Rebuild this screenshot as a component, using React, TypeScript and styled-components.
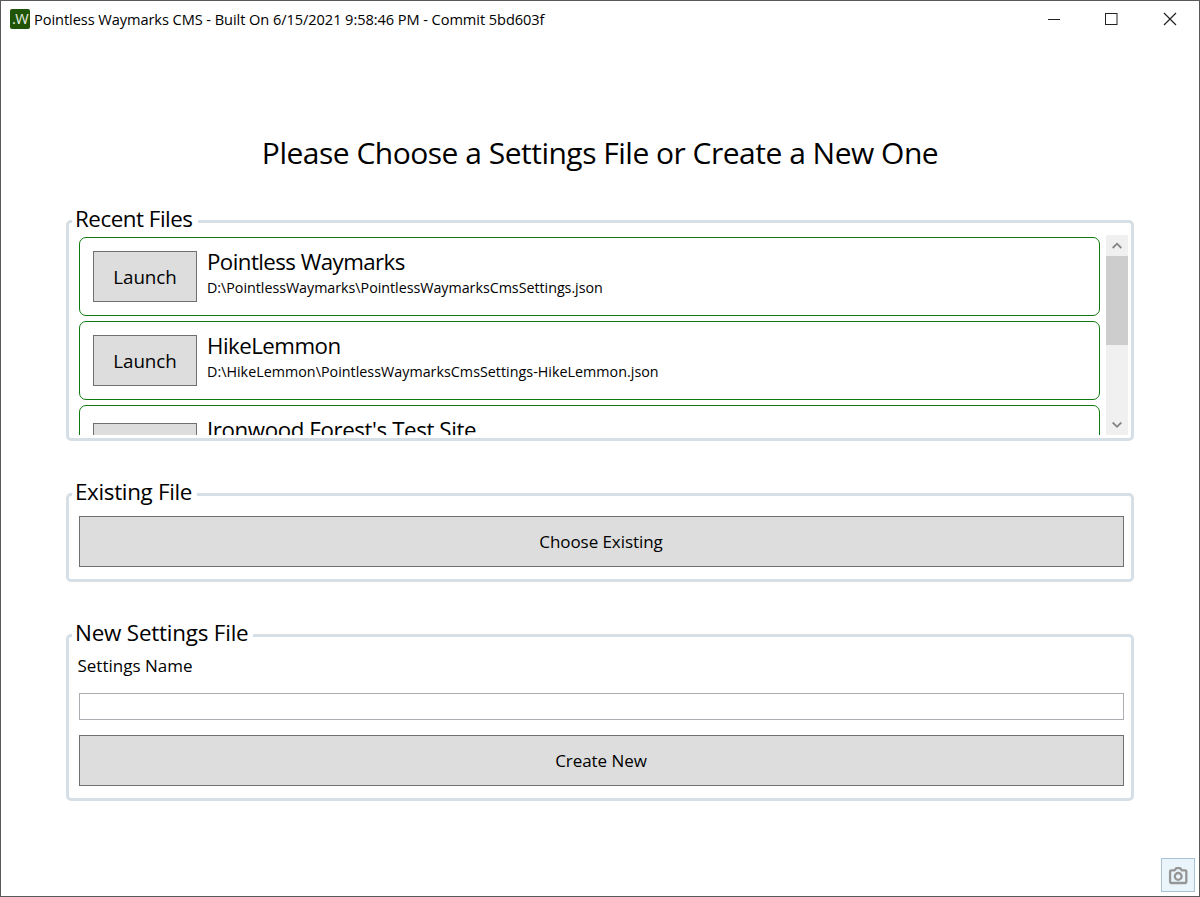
import React from "react";
import styled, { createGlobalStyle } from "styled-components";

const GlobalStyle = createGlobalStyle`
  * { box-sizing: border-box; }
  html, body { margin: 0; padding: 0; }
  body { background: #fff; overflow: hidden; }
  button, input { font: inherit; color: inherit; border-radius: 0; }
`;

const Window = styled.div`
  width: 1200px;
  height: 897px;
  display: flex;
  flex-direction: column;
  border: 1px solid #595959;
  background: #fff;
  color: #000;
  font-family: "Open Sans", "Noto Sans", sans-serif;
  white-space: nowrap;
`;

const TitleBar = styled.header`
  display: flex;
  align-items: center;
  height: 36px;
  padding: 0 7px 0 8px;
`;

const Title = styled.div`
  flex: 1;
  margin-left: 5px;
  font-size: 14.6px;
  line-height: 20px;
  letter-spacing: -0.07px;
`;

const Caption = styled.div`
  display: flex;
  svg { display: block; width: 58px; height: 36px; }
`;

const Content = styled.main`
  flex: 1;
  display: flex;
  flex-direction: column;
  padding: 96px 65px 0;
`;

const Heading = styled.h1`
  margin: 0 0 35px;
  height: 40px;
  line-height: 40px;
  font-size: 30px;
  font-weight: 400;
  text-align: center;
  letter-spacing: -0.5px;
`;

const GroupBox = styled.fieldset<{ $height: number; $gap: number }>`
  min-width: 0;
  height: ${(p) => p.$height}px;
  margin: 0 0 ${(p) => p.$gap}px;
  padding: 0 7px 0 10px;
  border: 3px solid #d5dfe5;
  border-radius: 5px;
`;

const Legend = styled.legend<{ $width: number; $spacing: number }>`
  width: ${(p) => p.$width}px;
  height: 27px;
  margin-left: -7px;
  padding: 0 0 0 3px;
  line-height: 21px;
  font-size: 22.4px;
  letter-spacing: ${(p) => p.$spacing}px;
`;

const RecentArea = styled.div`
  display: flex;
  justify-content: space-between;
  height: 200px;
  margin-right: -4px;
`;

const RecentList = styled.div`
  width: 1021px;
  height: 200px;
  padding-top: 2px;
  overflow: hidden;
`;

const Card = styled.article<{ $tall?: boolean }>`
  display: flex;
  align-items: center;
  height: ${(p) => (p.$tall ? 87 : 79)}px;
  margin-bottom: 5px;
  padding: 0 13px;
  border: 1px solid #0f7a0f;
  border-radius: 7px;
`;

const Button = styled.button<{ $width?: string; $size?: number }>`
  display: block;
  width: ${(p) => p.$width ?? "100%"};
  height: 51px;
  flex: none;
  padding: ${(p) => (p.$size ? "0" : "1px 1px 0 0")};
  border: 1px solid #707070;
  background: #ddd;
  font-size: ${(p) => p.$size ?? 17}px;
  line-height: 24px;
  letter-spacing: -0.06px;
`;

const FileInfo = styled.div`
  align-self: flex-start;
  margin-left: 10px;
  padding-top: 9px;
`;

const FileTitle = styled.div`
  font-size: 22.3px;
  line-height: 30px;
`;

const FilePath = styled.div`
  padding-top: 1px;
  font-size: 14.3px;
  line-height: 20px;
`;

const ScrollBar = styled.div`
  display: flex;
  flex-direction: column;
  width: 22px;
  height: 200px;
  background: #f0f0f0;
  svg { display: block; width: 22px; height: 21px; }
`;

const Track = styled.div`
  flex: 1;
`;

const Thumb = styled.div`
  height: 89px;
  background: #cdcdcd;
`;

const Stack = styled.div<{ $top: number }>`
  padding-top: ${(p) => p.$top}px;
`;

const Label = styled.label`
  display: block;
  margin-left: -1.5px;
  font-size: 17px;
  line-height: 24px;
`;

const TextBox = styled.input`
  display: block;
  width: 100%;
  height: 27px;
  margin: 15px 0 15px;
  border: 1px solid #abadb3;
  background: #fff;
  outline: none;
`;

const Footer = styled.footer`
  display: flex;
  justify-content: flex-end;
  padding: 0 4px 4px 0;
`;

const CameraButton = styled.button`
  display: flex;
  align-items: center;
  justify-content: center;
  width: 34px;
  height: 34px;
  padding: 0;
  border: 1px solid #a9c3d6;
  background: #e9f4fb;
`;

const AppLogo = styled.div`
  display: flex;
  align-items: center;
  justify-content: center;
  width: 20px;
  height: 20px;
  margin: 0 -1px 0 1px;
  border-radius: 2px;
  background: #205507;
  color: #e8efe4;
  font-size: 14.5px;
  line-height: 20px;
  letter-spacing: -0.6px;
`;

interface RecentFile {
  name: string;
  path: string;
  nameSpacing: number;
  pathSpacing: number;
  tall?: boolean;
}

const recentFiles: RecentFile[] = [
  { name: "Pointless Waymarks", path: "D:\\PointlessWaymarks\\PointlessWaymarksCmsSettings.json", nameSpacing: -0.56, pathSpacing: -0.03 },
  { name: "HikeLemmon", path: "D:\\HikeLemmon\\PointlessWaymarksCmsSettings-HikeLemmon.json", nameSpacing: -0.52, pathSpacing: 0.02 },
  { name: "Ironwood Forest's Test Site", path: "D:\\IronwoodForest\\PointlessWaymarksCmsSettings.json", nameSpacing: -0.4, pathSpacing: 0, tall: true },
];

const Chevron = ({ down }: { down?: boolean }) => (
  <svg viewBox="0 0 22 21" fill="none" stroke="#858585" strokeWidth="1.8">
    <path d={down ? "M6.7 8.5 L11 12.8 L15.3 8.5" : "M6.7 13 L11 8.7 L15.3 13"} />
  </svg>
);

export default function App() {
  return (
    <>
      <GlobalStyle />
      <Window>
        <TitleBar>
          <AppLogo>.W</AppLogo>
          <Title>Pointless Waymarks CMS - Built On 6/15/2021 9:58:46 PM - Commit 5bd603f</Title>
          <Caption>
            <svg viewBox="0 0 58 36"><path d="M30 18.5h12" stroke="#222" fill="none" /></svg>
            <svg viewBox="0 0 58 36"><rect x="29.5" y="12.5" width="11.5" height="11" stroke="#222" fill="none" /></svg>
            <svg viewBox="0 0 58 36"><path d="M30 12l12 12M42 12l-12 12" stroke="#222" strokeWidth="1.2" fill="none" /></svg>
          </Caption>
        </TitleBar>
        <Content>
          <Heading>Please Choose a Settings File or Create a New One</Heading>

          <GroupBox $height={233} $gap={40}>
            <Legend $width={126} $spacing={-0.48}>Recent Files</Legend>
            <RecentArea>
              <RecentList>
                {recentFiles.map((f) => (
                  <Card key={f.name} $tall={f.tall}>
                    <Button $width="104px" $size={18.8}>Launch</Button>
                    <FileInfo>
                      <FileTitle style={{ letterSpacing: f.nameSpacing }}>{f.name}</FileTitle>
                      <FilePath style={{ letterSpacing: f.pathSpacing }}>{f.path}</FilePath>
                    </FileInfo>
                  </Card>
                ))}
              </RecentList>
              <ScrollBar>
                <Chevron />
                <Track><Thumb /></Track>
                <Chevron down />
              </ScrollBar>
            </RecentArea>
          </GroupBox>

          <GroupBox $height={101} $gap={40}>
            <Legend $width={125} $spacing={-0.32}>Existing File</Legend>
            <Stack $top={8}>
              <Button>Choose Existing</Button>
            </Stack>
          </GroupBox>

          <GroupBox $height={179} $gap={0}>
            <Legend $width={181} $spacing={-0.2}>New Settings File</Legend>
            <Stack $top={5}>
              <Label htmlFor="settings-name">Settings Name</Label>
              <TextBox id="settings-name" />
              <Button>Create New</Button>
            </Stack>
          </GroupBox>
        </Content>
        <Footer>
          <CameraButton aria-label="Screenshot">
            <svg width="20" height="20" viewBox="0 0 20 20" fill="none" stroke="#969696" strokeWidth="2.3">
              <path d="M3 5.3h3.6l1.6-2.1h4l1.6 2.1h3.6q.9 0 .9.9v10.9q0 .9-.9.9H3q-.9 0-.9-.9V6.2q0-.9.9-.9z" strokeLinejoin="round" />
              <circle cx="10.2" cy="11.4" r="3.4" />
            </svg>
          </CameraButton>
        </Footer>
      </Window>
    </>
  );
}
